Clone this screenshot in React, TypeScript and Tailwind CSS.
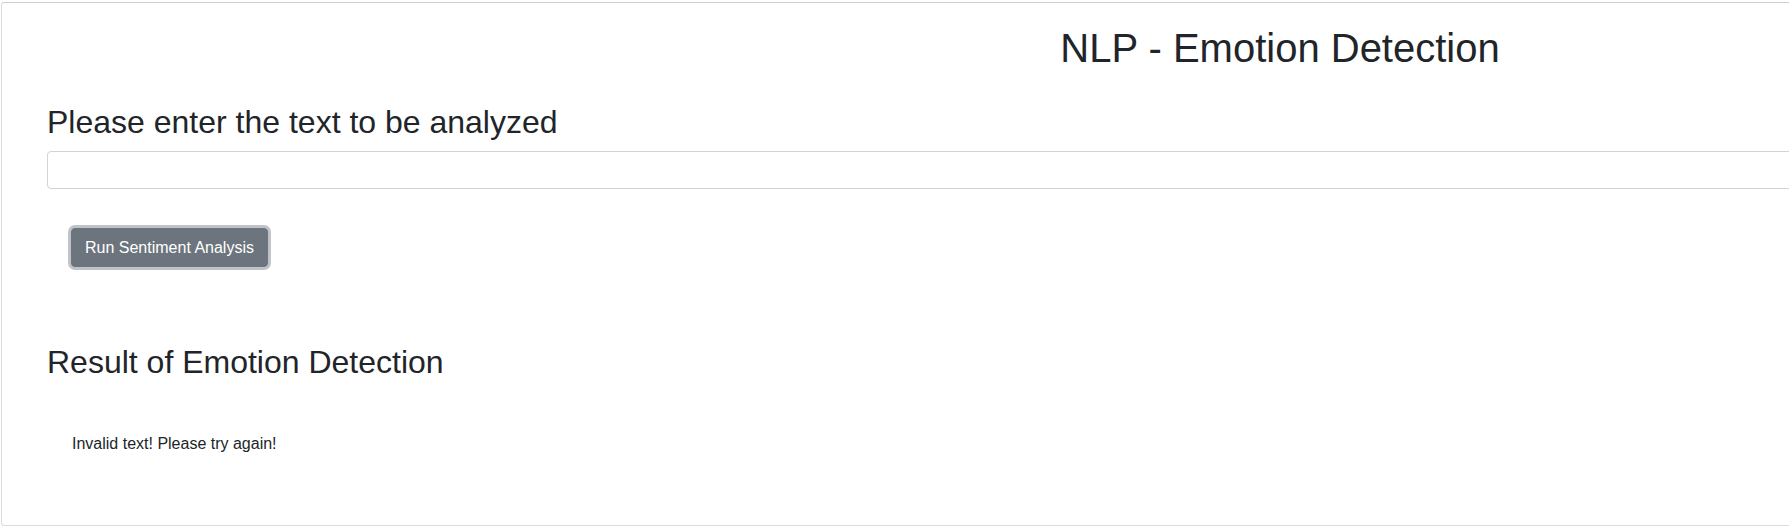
export default function App() {
  return (
    <div className="w-screen h-screen overflow-hidden bg-white text-[#212529] font-['Liberation_Sans',Arial,sans-serif]">
      <div className="ml-[1px] mt-[2px] w-[2558px] h-[524px] border border-[#dcdcdc] border-t-[#cfcfcf] rounded-[3px]">
        <h1 className="pt-[21px] text-center text-[40px] leading-[48px] font-normal">
          NLP - Emotion Detection
        </h1>

        <div className="pl-[45px] pr-[45px]">
          <h2 className="mt-[31px] text-[32px] leading-[38px] font-normal">
            Please enter the text to be analyzed
          </h2>
          <input
            type="text"
            className="mt-[10px] block w-full h-[38px] px-3 border border-[#ced4da] rounded-[4px] outline-none"
          />

          <div className="mt-[39px] pl-[24px]">
            <button
              type="button"
              className="h-[39px] px-[13px] rounded-[4px] bg-[#6c757d] border border-[#6c757d] text-white text-[16px] shadow-[0_0_0_3px_rgba(130,138,145,0.5)]"
            >
              Run Sentiment Analysis
            </button>
          </div>

          <h2 className="mt-[76px] text-[32px] leading-[38px] font-normal">
            Result of Emotion Detection
          </h2>

          <p className="mt-[51px] pl-[25px] text-[16px] leading-[24px]">
            Invalid text! Please try again!
          </p>
        </div>
      </div>
    </div>
  );
}
